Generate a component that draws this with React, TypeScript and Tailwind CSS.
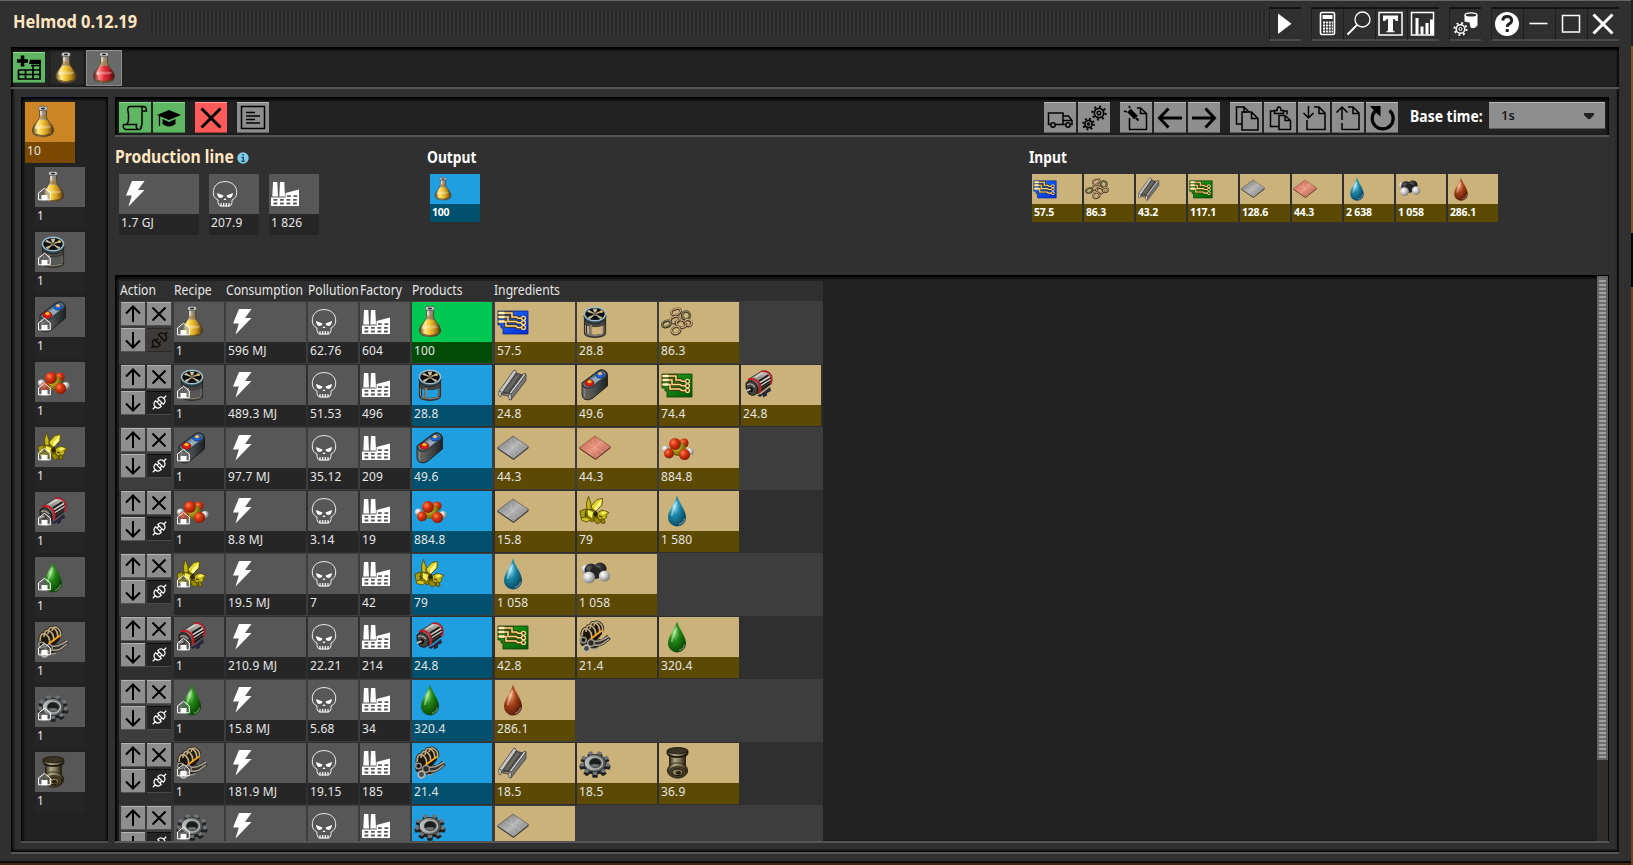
import React from "react";

const FONT = "font-['Noto_Sans','Open_Sans',sans-serif]";

function Defs() {
  const lin = (id: string, stops: string[], x2 = 1, y2 = 0) => (
    <linearGradient id={id} x1="0" y1="0" x2={x2} y2={y2}>
      {stops.map((c, i) => (
        <stop key={i} offset={i / (stops.length - 1)} stopColor={c} />
      ))}
    </linearGradient>
  );
  const rad = (id: string, a: string, b: string, c: string) => (
    <radialGradient id={id} cx="0.35" cy="0.35" r="0.75">
      <stop offset="0" stopColor={a} />
      <stop offset="0.4" stopColor={b} />
      <stop offset="1" stopColor={c} />
    </radialGradient>
  );
  return (
    <svg width="0" height="0" className="absolute">
      <defs>
        {lin("yellow", ["#7c5a1c", "#ffe98a", "#f0c030", "#c08c20", "#5c3e0c"])}
        {lin("red", ["#7a1a1a", "#ff8a8a", "#e03038", "#b81824", "#4a0a0e"])}
        {lin("glass", ["#3c3630", "#c8bca8", "#7c7262", "#3a342c"])}
        {lin("batt", ["#6e6c66", "#4a4c4c", "#1a2024"])}
        {lin("steel", ["#c8caca", "#7c807e", "#4c4e4e"])}
        {lin("plate", ["#6c6c6c", "#b4b4b4", "#747474"], 1, 1)}
        {lin("copper", ["#b8604c", "#e8937c", "#a8543e"], 1, 1)}
        {lin("blueb", ["#1c78ff", "#0628d0"], 1, 1)}
        {lin("greenb", ["#20a818", "#065806"], 1, 1)}
        {lin("pipeg", ["#2c2618", "#b0a888", "#7c7254", "#201a0e"])}
        {lin("motor", ["#c8c4bc", "#7c7874", "#2c2a2a"], 0, 1)}
        {rad("dblue", "#a8e4f4", "#1c88aa", "#083c54")}
        {rad("dgreen", "#98e880", "#208414", "#083a04")}
        {rad("dred", "#f4b080", "#a8441a", "#481404")}
        {rad("bred", "#ff8050", "#d83410", "#741804")}
        {rad("byel", "#e8e060", "#b0a01c", "#504604")}
        {rad("bwhite", "#ffffff", "#d0d0d0", "#6c6c6c")}
        {rad("bblack", "#606060", "#303030", "#101010")}
      </defs>
    </svg>
  );
}

function Flask({ c }: { c: string }) {
  return (
    <g>
      <path d="M12.500 3v8.500Q11 15 7 19.500q-4 7 2 10 7 2.500 14 0 6-3 2-10-4-4.500-5.500-8V3z" fill="url(#glass)" stroke="#4a3a18" strokeWidth=".7" />
      <path d="M11.600 14.500 7.500 20q-3.500 6 2 8.300 6.500 2.200 13 0 5.500-2.300 2-8.300l-4.100-5.500q-4.400-2-8.800 0z" fill={`url(#${c})`} />
      <ellipse cx="16" cy="21" rx="8" ry="1.600" fill="#fff" opacity=".3" />
      <path d="M10.500 17.500 8 22l2.500 2z" fill="#fff" opacity=".55" />
      <path d="M9 28q7 3 14 0" stroke="#5c3c0c" strokeWidth="1.200" fill="none" opacity=".7" />
      <rect x="13.200" y="5" width="1.800" height="7" fill="#fff" opacity=".55" />
      <path d="M12.800 9.500h6.400v3.500h-6.400z" fill="#a87c30" opacity=".6" />
      <ellipse cx="16" cy="2.400" rx="4.400" ry="2.200" fill="#dcdcdc" stroke="#555" strokeWidth=".8" />
      <ellipse cx="16" cy="2.500" rx="2.400" ry="1" fill="#2c2c2c" />
    </g>
  );
}

function Drop({ c }: { c: string }) {
  return (
    <g>
      <path d="M16 .5C14.500 7 7 15 7 22.500a9 9 0 0 0 18 0C25 15 17.500 7 16 .5z" fill={`url(#${c})`} />
      <path d="M15.500 6.500C14 13 11 16 10.800 21" stroke="#fff" strokeWidth="1.700" fill="none" opacity=".4" />
      <path d="M18 29.500q5-1.500 5.500-6" stroke="#fff" strokeWidth="1.400" fill="none" opacity=".35" />
    </g>
  );
}

const TRACES = "M1 7h14v4h4.500l1.500 1.300h4M1 11h10v4.500h8l1.500 1.200h4M1 15.500h8v4.500h10l1.500 1.500h4";

function Board({ c, edge }: { c: string; edge: string }) {
  return (
    <g>
      <path d="M1 5h30v23H6v-6H4v-3H1z" fill={`url(#${c})`} stroke={edge} strokeWidth=".8" />
      <path d={TRACES} stroke="#4a3004" strokeWidth="3.300" fill="none" />
      <path d={TRACES} stroke="#ffdc8c" strokeWidth="1.500" fill="none" />
      <path d="M2 7h5.500M2 11h5.500M2 15.500h5.500" stroke="#fff0c0" strokeWidth="2.700" />
      {[12.300, 16.700, 21.500].map((y) => (
        <circle key={y} cx="26.500" cy={y} r="1.900" fill="#2c2408" stroke="#ffdc8c" strokeWidth="1.300" />
      ))}
    </g>
  );
}

function Gear() {
  const a = [0, 40, 80, 120, 160, 200, 240, 280, 320];
  return (
    <g transform="translate(16 16) scale(1 .8)">
      <g transform="translate(0 3)" fill="#1e2020">
        {a.map((d) => (
          <rect key={d} x="-2.700" y="-15.500" width="5.400" height="7" rx="1" transform={`rotate(${d + 20})`} />
        ))}
        <circle r="11.500" />
      </g>
      <g fill="#70747a">
        {a.map((d) => (
          <rect key={d} x="-2.200" y="-15" width="4.400" height="6" rx="1" transform={`rotate(${d + 20})`} />
        ))}
      </g>
      <circle r="10.800" fill="url(#steel)" stroke="#2c2e2e" strokeWidth="1" />
      <circle r="7.600" fill="none" stroke="#b8bcbc" strokeWidth="1.300" />
      <circle r="5.800" fill="#1c1e1e" />
      <path d="M-5 2.500A5.800 5.800 0 0 0 5 2.500Q0 0-5 2.500z" fill="#6c706e" />
    </g>
  );
}

function Plate({ c, edge }: { c: string; edge: string }) {
  return (
    <g>
      <path d="M.5 15.500 16.500 26.500 31.500 14.500v1.800L16.500 28 .5 17z" fill={edge} />
      <path d="M.5 15.500 16 4l15.500 10.500-15 12z" fill={`url(#${c})`} stroke={edge} strokeWidth=".5" />
      <path d="M8 11 24 20M22 9 10 22M13 7l5 17" stroke="#fff" strokeWidth=".8" opacity=".25" />
      <path d="M2 16 16.500 26 30 15" stroke="#fff" strokeWidth=".6" opacity=".4" fill="none" />
    </g>
  );
}

function Engine() {
  return (
    <g>
      <path d="M6.500 13v14q0 3 9.500 3.500 9.500-.5 9.500-3.500V13" fill="none" stroke="#34302c" strokeWidth="3.200" />
      <path d="M6.500 14v13M25 14v13" fill="none" stroke="#8c8880" strokeWidth="1.100" />
      <path d="M6 14q10 6 20 0v4.500q-10 4.500-20 0z" fill="#4c4844" stroke="#24201e" strokeWidth=".6" />
      <path d="M11.500 18.500v10" stroke="#5c5854" strokeWidth="2.400" />
      <path d="M12 19v9" stroke="#b0aca4" strokeWidth=".9" />
      <path d="M7 28q9 3.500 18 0" stroke="#7c786e" strokeWidth="1.400" fill="none" />
      <ellipse cx="16" cy="10.500" rx="11" ry="7.500" fill="#34444c" stroke="#1c262c" />
      <ellipse cx="16" cy="8" rx="10.500" ry="6.800" fill="#0c0e10" stroke="#9cbecc" strokeWidth="1.400" />
      <path d="M15 7.500 8.500 5.500l1.500-1.300zM17 7.500l6-3 1 1.300zM15 9l-6 2.500 2 1.200zM17 9l6 2.500-1.500 1.300zM15.300 6l-1-3h3.500l-1 3z" fill="#c8bc98" stroke="#d8ccaa" strokeWidth=".7" />
      <circle cx="16" cy="8" r="2" fill="#7c7050" />
      <path d="M21 5l2.500 1.500" stroke="#e0b840" strokeWidth="1.500" />
    </g>
  );
}

function Battery() {
  return (
    <g>
      <path d="M3 14 19.500 1.500q3-1.500 6 0 3 1.500 3 4.500v11L14 29q-4 3-8 1.500Q3 29 3 25z" fill="url(#batt)" stroke="#141414" strokeWidth=".8" />
      <path d="M3.500 14 20 2q3-1.500 5.500 0 3 2.500 1 5.500L14 17.500q-3.500 2.500-7.500 1-3.500-1.500-3-4.500z" fill="#6c8698" stroke="#30383c" strokeWidth="1.500" />
      <path d="M12 11l6-4.500 4 3-6 4.500z" fill="#a4bccc" opacity=".7" />
      <path d="M5.500 20v8" stroke="#a8a49c" strokeWidth="1.200" opacity=".5" />
      <ellipse cx="10.300" cy="14" rx="4.300" ry="3.200" fill="#e01810" stroke="#7c0c08" strokeWidth=".8" />
      <ellipse cx="10.500" cy="12.600" rx="2.200" ry="1.700" fill="#ffc030" />
      <ellipse cx="21" cy="6" rx="4.200" ry="3" fill="#1c64d8" stroke="#0c347c" strokeWidth=".8" />
      <ellipse cx="21" cy="4.600" rx="2.100" ry="1.600" fill="#ffbc54" />
    </g>
  );
}

function Acid() {
  return (
    <g>
      <circle cx="23" cy="11" r="4.600" fill="url(#bred)" />
      <circle cx="4.500" cy="17" r="3.600" fill="url(#bwhite)" />
      <circle cx="17" cy="16.500" r="7.600" fill="url(#byel)" />
      <circle cx="8" cy="21.500" r="5" fill="url(#bred)" />
      <circle cx="29" cy="19.500" r="3.600" fill="url(#bwhite)" />
      <circle cx="23.500" cy="22.500" r="5.600" fill="url(#bred)" />
      <circle cx="14" cy="12" r="5.900" fill="url(#bred)" />
    </g>
  );
}

function Gas() {
  return (
    <g>
      <circle cx="7" cy="11" r="4.500" fill="url(#bwhite)" />
      <circle cx="12" cy="12" r="6.500" fill="url(#bblack)" />
      <circle cx="21" cy="11" r="6.500" fill="url(#bblack)" />
      <circle cx="16.500" cy="15" r="6" fill="#242424" />
      <circle cx="25.500" cy="18" r="5.600" fill="url(#bwhite)" />
      <circle cx="10" cy="19.500" r="6" fill="url(#bwhite)" />
    </g>
  );
}

function Sulfur() {
  return (
    <g stroke="#4c4402" strokeWidth=".8">
      <path d="M7.500 8 9.500 1.500 12 9v9l-4-1z" fill="#c8b814" />
      <path d="M12 11 18 4.500l5.500-1L23 10l-8 8z" fill="#e0d428" />
      <path d="M16 11.500 22.500 4.500l-1 5.500-5.500 7z" fill="#fffb90" stroke="none" />
      <path d="M1 16l5-2 4 4-4 6-4-1z" fill="#a89c10" />
      <path d="M7 14l8 1 4 7-6 5-7-5z" fill="#8c8006" />
      <path d="M9 15l5 2-1 6-4-3z" fill="#f4f060" stroke="none" />
      <path d="M18 18l5-3 7 2.500-3 3 1 1.500-4 4-5-2z" fill="#c0b010" />
      <path d="M21 18l4-2 3 1.500-4 2.500z" fill="#f4ec60" stroke="none" />
      <path d="M15 22l4 1 3 4-4 2-3-3zM22 24l3 0 1 4-3 .5z" fill="#988a06" />
      <path d="M2 23l5-1 5 2.500-4 2.500-5-1.500z" fill="#d0c41c" />
      <path d="M14 19l3-4 2 5-3 2z" fill="#2c2602" stroke="none" />
      <path d="M6 18l2 3M20 21l3 1" stroke="#3c3402" strokeWidth="1.300" />
    </g>
  );
}

function Motor() {
  return (
    <g>
      <path d="M14 26l4-1 9-7 1 4-4 2v2.500l-4 2V26l-3 2z" fill="#26263c" />
      <path d="M6 10 18 2.500q5-2 8.500 1Q31 8 27.500 15.500L16 24q-7 2-11-3-2-6 1-11z" fill="url(#motor)" stroke="#242222" strokeWidth=".8" />
      <path d="M16 12l9.500-6M17 15l11-6.500M18 18l10-6.500M18 21l9-6.500" stroke="#141214" strokeWidth="1.500" />
      <path d="M12 8.500l8-5M17 13.700l10-6M18 16.600l9.500-6" stroke="#e0dcd4" strokeWidth="1.100" />
      <path d="M5 10.500q7-2 11 4 3 5 0 9.500" fill="none" stroke="#c81c26" strokeWidth="1.900" />
      <path d="M18 2.500q7-1 9.500 4 2.500 5 0 9" fill="none" stroke="#c81c26" strokeWidth="1.500" />
      <path d="M3 14q4-4 8-1 5 4 3 11-3 4-8 1-4-5-3-11z" fill="#44423e" stroke="#141414" />
      <path d="M4 16q4-3 8 2" stroke="#a8a49c" strokeWidth="1.400" fill="none" />
      <circle cx="7.500" cy="20.500" r="2.600" fill="#141210" />
      <path d="M3 22l4.500-1.800" stroke="#d0ccc4" strokeWidth="1.800" />
    </g>
  );
}

function Block() {
  return (
    <g fill="none">
      <path d="M2 12 14 1l9 3v9L13 25l-9-3z" fill="#1c170e" />
      <path d="M3 15Q3 6 8.500 8q5 3 4 10M7 11Q7 3 12.500 5q5 3 4 10M11 8Q11 0 16.500 2q5 3 4 10M15 5Q16-1 20.500 2q4 3 3 8" stroke="#2c2414" strokeWidth="3.200" />
      <path d="M3 15Q3 6 8.500 8q5 3 4 10M7 11Q7 3 12.500 5q5 3 4 10M11 8Q11 0 16.500 2q5 3 4 10M15 5Q16-1 20.500 2q4 3 3 8" stroke="#c0ad84" strokeWidth="1.500" />
      <path d="M11.500 18 23 9.500" stroke="#ffa814" strokeWidth="1.700" />
      <path d="M1 17q-1 7 4 9l12 2 8-7-4-3-7 2z" fill="#26221a" />
      <path d="M15 22q6 2 10-2l5-4" stroke="#34302a" strokeWidth="5.500" />
      <path d="M14 20q7 1 11-2l5-3M15 24q7 1 11-3l4-3" stroke="#aca494" strokeWidth="1.500" />
      <circle cx="4.500" cy="19" r="2.800" stroke="#98948a" strokeWidth="1.500" fill="#1c1a18" />
      <circle cx="12" cy="22" r="3.400" stroke="#98948a" strokeWidth="1.500" fill="#2c2a26" />
      <circle cx="7.500" cy="27.500" r="3.300" stroke="#b8b4aa" strokeWidth="1.700" fill="#4c4a46" />
      <path d="M14 27.500q3 1 5-1" stroke="#98948a" strokeWidth="1.500" />
    </g>
  );
}

function Pipe() {
  return (
    <g stroke="#201a0e" strokeWidth=".8">
      <path d="M8.500 7h16v15h-16z" fill="url(#pipeg)" />
      <path d="M6 4q0-3 10.500-3.500Q27 1 27 4v3Q25 10.500 16.500 10.500 8 10.500 6 7z" fill="url(#pipeg)" />
      <ellipse cx="16.500" cy="3.800" rx="9.800" ry="3" fill="#3c3422" />
      <path d="M7 7.800q9 4 19 0" stroke="#141008" strokeWidth="1.300" fill="none" />
      <ellipse cx="16.500" cy="23.500" rx="10.200" ry="7.700" fill="url(#pipeg)" />
      <ellipse cx="16.500" cy="25" rx="8" ry="5.500" fill="#50462c" />
      <ellipse cx="16.500" cy="25.300" rx="5.500" ry="3.400" fill="#8c8058" stroke="#241e10" strokeWidth="1.200" />
      <ellipse cx="17.500" cy="25.800" rx="2.300" ry="1.500" fill="#2c2412" />
    </g>
  );
}

function Beam() {
  return (
    <g stroke="#343434" strokeWidth=".7">
      <path d="M2 22 17 1l2 1 1 4L6 26z" fill="#c4c4c4" />
      <path d="M5 24 19 4l7 2-13 19z" fill="#484844" />
      <path d="M7 22.500 20 5l3 1-12 17z" fill="#68685f" stroke="none" />
      <path d="M12 24.500 27 4.500l2 .5v6.500L14 31z" fill="#747474" />
      <path d="M12 24.500 27 4.500l2 .5-15 20z" fill="#e4e4e4" />
      <path d="M2 22l2 .6v2.200l8 2v-2l2 .8v5.500l-2-.8v-3l-8-2v2.500l-2-.8z" fill="#f0f0f0" />
    </g>
  );
}

function Wire() {
  const rings = [
    [15, 6, 4.800, 3],
    [25, 9.500, 3.900, 3.900],
    [14, 14, 4.600, 3],
    [27, 17, 3.600, 3],
    [5.500, 18, 4.300, 3],
    [20, 18, 5, 3.600],
    [15, 24.500, 4.300, 3.600],
  ];
  return (
    <g fill="none">
      {rings.map(([x, y, a, b], i) => (
        <g key={i} transform={`rotate(${i % 2 ? 20 : -20} ${x} ${y})`}>
          <ellipse cx={x} cy={y} rx={a} ry={b} stroke="#4a3822" strokeWidth="2.600" />
          <ellipse cx={x} cy={y - 0.500} rx={a} ry={b} stroke={i % 3 === 1 ? "#7c8464" : "#d8b48c"} strokeWidth="1.100" />
        </g>
      ))}
    </g>
  );
}

function House() {
  return (
    <g>
      <path d="M1.500 28.800V22L7.500 17.300 13.300 22v6.800z" fill="#777" fillOpacity=".45" stroke="#fff" strokeWidth="1" />
      <path d="M4.500 24h6v5.200h-6z" fill="#fff" />
    </g>
  );
}

function Bolt() {
  return <path d="M11 3h12.500L17 12h6.500L7.500 28.500l3.300-11H5z" fill="#fff" />;
}

function Skull() {
  return (
    <g>
      <path
        d="M7 24.500V22Q2.500 20 2.300 15C2 8 7 3.600 14 3.600S26 8 25.700 15q-.2 5-4.700 7v2.500q0 3-3 3.500h-8q-3-.5-3-3.500z"
        fill="none"
        stroke="#eee"
        strokeWidth="1"
      />
      <path d="M6 15l6.500 2.500q-.5 2.500-3.500 2.500-2.500-.5-3-5zM22 15l-6.500 2.500q.5 2.500 3.500 2.500 2.500-.5 3-5zM12.500 22l1.500-2 1.500 2z" fill="#fff" />
      <path d="M10 25v3.500M12.700 25v3.500M15.300 25v3.500M18 25v3.500" stroke="#fff" strokeWidth="1.200" />
    </g>
  );
}

function Factory() {
  return (
    <g fill="#fff">
      <path d="M2 4h4.300l.7 14.500H1.300zM9 4h4.300l.7 14.500H8.300z" />
      <path fillRule="evenodd" d="M0 19.500h14.500V15L28 11.500V28H0zM2.500 21v1.800h3.800V21zm6.500 0v1.800h3.800V21zm6.500 0v1.800h3.800V21zm6.500 0v1.800h3.800V21zM2.500 24.600v1.800h3.800v-1.800zm6.500 0v1.800h3.800v-1.800zm6.500 0v1.800h3.800v-1.800zm6.500 0v1.800h3.800v-1.800zM16 17.200V19h3.800v-1.800zm6.500 0V19h3.800v-1.800z" />
    </g>
  );
}

const SPRITES: Record<string, React.ReactNode> = {
  flask: <Flask c="yellow" />,
  redflask: <Flask c="red" />,
  engine: <Engine />,
  battery: <Battery />,
  acid: <Acid />,
  gas: <Gas />,
  sulfur: <Sulfur />,
  motor: <Motor />,
  block: <Block />,
  gear: <Gear />,
  pipe: <Pipe />,
  beam: <Beam />,
  wire: <Wire />,
  iron: <Plate c="plate" edge="#3c3c3c" />,
  copper: <Plate c="copper" edge="#703424" />,
  adv: <Board c="blueb" edge="#0a2a90" />,
  circuit: <Board c="greenb" edge="#0a3c06" />,
  water: <Drop c="dblue" />,
  lube: <Drop c="dgreen" />,
  heavy: <Drop c="dred" />,
  bolt: <Bolt />,
  skull: <Skull />,
  factory: <Factory />,
};

function Sprite({ name, size = 32, recipe = false }: { name: string; size?: number; recipe?: boolean }) {
  return (
    <svg width={size} height={size} viewBox="0 0 32 32" className="block shrink-0 overflow-visible">
      {SPRITES[name]}
      {recipe && <House />}
    </svg>
  );
}

const TONES = {
  gray: ["bg-[#575757]", "bg-[#262626]"],
  side: ["bg-[#575757]", "bg-[#262526]"],
  orange: ["bg-[#cc8524]", "bg-[#7b4800]"],
  green: ["bg-[#00c853]", "bg-[#034c08]"],
  blue: ["bg-[#209fe0]", "bg-[#00506e]"],
  tan: ["bg-[#cab27a]", "bg-[#5c4a04]"],
} as const;
type Tone = keyof typeof TONES;

function Cell({ icon, label, tone = "gray", wide = false, recipe = false }: { icon: string; label: string; tone?: Tone; wide?: boolean; recipe?: boolean }) {
  const [top, bottom] = TONES[tone];
  return (
    <div className={`flex shrink-0 flex-col ${wide ? "w-[80px]" : "w-[50px]"}`}>
      <div className={`h-[40px] pl-[2px] pt-[4px] ${top}`}>
        <Sprite name={icon} recipe={recipe} />
      </div>
      <div className={`h-[21px] whitespace-nowrap pl-[2px] text-[12px] leading-[18px] tracking-[0.15px] text-[#e6e6e6] ${bottom}`}>{label}</div>
    </div>
  );
}

function SmallCell({ icon, label, tone }: { icon: string; label: string; tone: Tone }) {
  const [top, bottom] = TONES[tone];
  return (
    <div className="flex w-[50px] shrink-0 flex-col">
      <div className={`h-[30px] pl-[1px] pt-[3px] ${top}`}>
        <Sprite name={icon} size={24} />
      </div>
      <div className={`h-[18px] whitespace-nowrap pl-[2px] text-[10.500px] font-bold leading-[17px] tracking-[-0.2px] text-white ${bottom}`}>{label}</div>
    </div>
  );
}

type Kind = "green" | "red" | "gray";
const KIND = {
  green: "bg-[#5fb663] border-t-[#8fd892] border-b-[#3a7a3c]",
  red: "bg-[#fe5a5a] border-t-[#ff9a9a] border-b-[#a83a3a]",
  gray: "bg-[#8e8e8e] border-t-[#b8b8b8] border-b-[#5c5c5c]",
};

function Tool({ kind = "gray", children }: { kind?: Kind; children: React.ReactNode }) {
  return (
    <div className={`h-[31px] w-[32px] shrink-0 border-b border-t ${KIND[kind]}`}>
      <svg width="32" height="29" viewBox="0 1 32 29" fill="none" stroke="#000" strokeWidth="1.500" className="block">
        {children}
      </svg>
    </div>
  );
}

function FrameButton({ children }: { children?: React.ReactNode }) {
  return (
    <div className="h-[34px] w-[32px] border-b-2 border-l border-t-2 border-b-[#4c4a48] border-l-[#241c1a] border-t-[#151212] bg-[#2f2f2f]">
      <svg width="31" height="30" viewBox="0.500 0.500 31 30" fill="none" stroke="#fff" className="block">
        {children}
      </svg>
    </div>
  );
}

function TitleBar() {
  return (
    <header className="flex h-[46px] pl-[13px] pt-[6px]">
      <div className="w-[138px] pt-[2px] text-[#ffe6c0]">
        <span className="block origin-left scale-x-[0.91] whitespace-nowrap text-[18px] font-bold leading-[24px]">Helmod 0.12.19</span>
      </div>
      <div className="mt-[3px] h-[24px] w-[1115px] bg-[repeating-linear-gradient(90deg,#272727_0px,#272727_2px,#363536_2px,#363536_4px)]" />
      <div className="ml-[3px] flex gap-[10px]">
        <div className="flex">
          <FrameButton>
            <path d="M8.500 5v20.500L22 15.200z" fill="#fff" stroke="none" />
          </FrameButton>
        </div>
        <div className="flex">
          <FrameButton>
            <rect x="9" y="4" width="14" height="22" rx="1.500" strokeWidth="1.600" />
            <rect x="11" y="6.500" width="10" height="4" fill="#fff" stroke="none" />
            <path d="M11.500 14h10M11.500 17h10M11.500 20h10M11.500 23h10" strokeWidth="2" strokeDasharray="2 .9" />
          </FrameButton>
          <FrameButton>
            <circle cx="19" cy="11" r="7.500" strokeWidth="1.300" />
            <path d="M13.500 16.500 4 26" strokeWidth="2" />
          </FrameButton>
          <FrameButton>
            <rect x="3.500" y="4" width="23" height="22.500" strokeWidth="1.500" />
            <path d="M7.500 7h15v5.500h-2.300q0-2-2.700-2v11q0 1.500 2 1.500v.7h-9v-.7q2 0 2-1.500v-11q-2.700 0-2.700 2H7.500z" fill="#fff" stroke="none" />
          </FrameButton>
          <FrameButton>
            <rect x="4" y="4" width="22" height="22.500" strokeWidth="1.500" />
            <path d="M9.500 26V9.500M14.500 26V18M19.500 26V14.500M24 26V11" strokeWidth="3" />
          </FrameButton>
        </div>
        <div className="flex">
          <FrameButton>
            <path d="M15 6.500q7-3 13 0V17q-3 4-7 2l-1-5-5-1z" fill="#fff" stroke="none" />
            <ellipse cx="21.500" cy="6.500" rx="6" ry="2.200" fill="#2f2f2f" strokeWidth="1.200" />
            <circle cx="11" cy="20.500" r="4.300" strokeWidth="1.500" fill="#2f2f2f" />
            <circle cx="11" cy="20.500" r="1.500" />
            <circle cx="11" cy="20.500" r="6" strokeWidth="2" strokeDasharray="1.900 2.810" />
          </FrameButton>
        </div>
        <div className="flex">
          <FrameButton>
            <circle cx="15.500" cy="15.500" r="12" fill="#fff" stroke="none" />
            <path d="M11.200 12q.5-4 4.500-4t4.500 3.500q0 2.500-2.500 3.800-2 1-2 3.200M15.700 20.500v3" stroke="#222" strokeWidth="3" />
          </FrameButton>
          <FrameButton>
            <path d="M6 15h18" strokeWidth="1.600" />
          </FrameButton>
          <FrameButton>
            <rect x="7" y="7" width="17" height="16.500" strokeWidth="1.500" />
          </FrameButton>
          <FrameButton>
            <path d="M6 6l19 19M25 6 6 25" strokeWidth="3" />
          </FrameButton>
        </div>
      </div>
    </header>
  );
}

function Toolbar() {
  return (
    <div className="flex h-[40px] border-b-2 border-b-[#565656] bg-[#222222] pl-[4px] pt-[5px] shadow-[inset_2px_3px_3px_#000,inset_-2px_0_2px_#0a0a0a]">
      <div className="flex w-[925px]">
        <div className="flex gap-[2px]">
          <Tool kind="green">
            <path d="M24.500 4.500H11Q8.500 4.500 8.800 8l.7 4v6.500L8 23M24.500 4.500q3 0 3 4.500h-4.500M24.500 4.500Q22.500 5 23 9v13.500l-1.500 3M4.500 22.500h13q-1 3 1.500 5 4 .5 3.500-4.500M4.500 22.500q-1 4.500 2.500 5h12" />
          </Tool>
          <Tool kind="green">
            <path d="M16 8 4 13l12 5 12-5z" fill="#000" stroke="none" />
            <path d="M9.500 17v5q6.500 5 13 0v-5L16 20z" fill="#000" stroke="none" />
            <path d="M6.500 14v10" strokeWidth="1.300" />
          </Tool>
        </div>
        <div className="ml-[10px]">
          <Tool kind="red">
            <path d="M6.500 6.500l19 19M25.500 6.500l-19 19" strokeWidth="3" />
          </Tool>
        </div>
        <div className="ml-[10px]">
          <Tool>
            <rect x="4.500" y="4.500" width="23" height="22" />
            <path d="M9 10.500h9M9 14h14M9 17.500h9M9 21h14" />
          </Tool>
        </div>
      </div>
      <div className="flex gap-[10px]">
        <div className="flex gap-[2px]">
          <Tool>
            <path d="M6.500 22.500H4.500V11H19v11.500h-8M19 14h5.500l3.500 4.500v4h-1.500M19 22.500h3M19 18.500h9" />
            <circle cx="9" cy="23" r="2.200" />
            <circle cx="24" cy="23" r="2.200" />
          </Tool>
          <Tool>
            <circle cx="21" cy="11" r="4.700" strokeWidth="1.700" />
            <circle cx="21" cy="11" r="6.600" strokeWidth="2" strokeDasharray="2 3.180" />
            <circle cx="21" cy="11" r="1.800" />
            <circle cx="10.500" cy="22" r="3.600" strokeWidth="1.700" />
            <circle cx="10.500" cy="22" r="5.400" strokeWidth="2" strokeDasharray="1.800 2.440" />
            <circle cx="10.500" cy="22" r="1" />
          </Tool>
        </div>
        <div className="flex gap-[2px]">
          <Tool>
            <path d="M9.500 16v11.500h17V11.500L20.500 6H17M20.500 6v5.500h6" />
            <path d="M9 8.500l7 7" strokeWidth="5" />
            <path d="M4 9l3 1M9 4l1 2" strokeWidth="1.700" />
            <path d="M16 16l2.500 2.500" strokeWidth="2" />
          </Tool>
          <Tool>
            <path d="M28 16H6M14.500 6.500 5.500 16l9 9.500" strokeWidth="3" />
          </Tool>
          <Tool>
            <path d="M4 16h22M17.500 6.500l9 9.500-9 9.500" strokeWidth="3" />
          </Tool>
        </div>
        <div className="flex gap-[2px]">
          <Tool>
            <path d="M12 22H6.500V5H14l5 5M14 5v5h3" />
            <path d="M12 10h9.500l6.500 6.500V28H12zM21.500 10v6.500H28" />
          </Tool>
          <Tool>
            <path d="M14.500 24.500H6.500V9H11M19 9h4v3.500M10.500 11.500h9V8.500h-2.500q0-3.500-2-3.500t-2 3.500h-2.500z" />
            <path d="M15 13.500h6l5.500 5V27.500H15zM21 13.500v5h5.500" />
          </Tool>
          <Tool>
            <path d="M16 5h5l6 6v16.500H9V18M21 5v6.500h6M10.500 4v12M5.500 11l5 5 5-5" />
          </Tool>
          <Tool>
            <path d="M16 5h5l6 6v16.500H10V21M21 5v6.500h6M10 18V5M4.500 10.500 10 5l5.500 5.500" />
          </Tool>
          <Tool>
            <path d="M23.500 8.500a10.500 10.500 0 1 1-14 .3" strokeWidth="3.200" />
            <path d="M4 4h10.500v10.500L11 11.500 7.500 8z" fill="#000" stroke="none" />
          </Tool>
        </div>
      </div>
      <div className="ml-[12px] w-[79px] pt-[3px] text-white">
        <span className="block origin-left scale-x-[0.9] whitespace-nowrap text-[15.500px] font-bold leading-[23px]">Base time:</span>
      </div>
      <div className="flex h-[27px] w-[116px] items-center justify-between border-b border-t border-b-[#5c5c5c] border-t-[#b8b8b8] bg-[#8e8e8e] pl-[12px] pr-[11px] text-[13px] font-semibold text-[#1c1c1c]">
        <span>1s</span>
        <svg width="10" height="7" viewBox="0 0 10 7" className="mt-[2px]">
          <path d="M0 0h10v2L6 6H4L0 2z" fill="#222" />
        </svg>
      </div>
    </div>
  );
}

const INPUTS = [
  ["adv", "57.5"],
  ["wire", "86.3"],
  ["beam", "43.2"],
  ["circuit", "117.1"],
  ["iron", "128.6"],
  ["copper", "44.3"],
  ["water", "2 638"],
  ["gas", "1 058"],
  ["heavy", "286.1"],
];

function Summary() {
  return (
    <section className="flex h-[138px] pt-[8px]">
      <div className="w-[312px]">
        <div className="flex h-[29px] text-[#ffe6c0]">
          <div className="w-[122px]">
            <span className="block origin-left scale-x-[0.87] whitespace-nowrap text-[18px] font-bold leading-[22px]">Production line</span>
          </div>
          <svg width="12" height="12" viewBox="0 0 12 12" className="mt-[7px]">
            <circle cx="6" cy="6" r="5.700" fill="#7fcdee" />
            <path d="M6 2v1.800M4.500 5.500H6.300V9M4.300 9.300h3.600" stroke="#26505e" strokeWidth="1.500" fill="none" />
          </svg>
        </div>
        <div className="flex gap-[10px] pl-[4px]">
          <Cell icon="bolt" label="1.7 GJ" wide />
          <Cell icon="skull" label="207.9" />
          <Cell icon="factory" label="1 826" />
        </div>
      </div>
      <div className="w-[602px] text-white">
        <div className="h-[29px]">
          <span className="block origin-left scale-x-[0.86] text-[16px] font-bold leading-[24px]">Output</span>
        </div>
        <div className="pl-[3px]">
          <SmallCell icon="flask" label="100" tone="blue" />
        </div>
      </div>
      <div className="text-white">
        <div className="h-[29px]">
          <span className="block origin-left scale-x-[0.86] text-[16px] font-bold leading-[24px]">Input</span>
        </div>
        <div className="flex gap-[2px] pl-[3px]">
          {INPUTS.map(([i, l]) => (
            <SmallCell key={i} icon={i} label={l} tone="tan" />
          ))}
        </div>
      </div>
    </section>
  );
}

type Row = { item: string; count: string; power: string; pollution: string; factory: string; out: string; ins: [string, string][] };
const ROWS: Row[] = [
  { item: "flask", count: "1", power: "596 MJ", pollution: "62.76", factory: "604", out: "100", ins: [["adv", "57.5"], ["engine", "28.8"], ["wire", "86.3"]] },
  { item: "engine", count: "1", power: "489.3 MJ", pollution: "51.53", factory: "496", out: "28.8", ins: [["beam", "24.8"], ["battery", "49.6"], ["circuit", "74.4"], ["motor", "24.8"]] },
  { item: "battery", count: "1", power: "97.7 MJ", pollution: "35.12", factory: "209", out: "49.6", ins: [["iron", "44.3"], ["copper", "44.3"], ["acid", "884.8"]] },
  { item: "acid", count: "1", power: "8.8 MJ", pollution: "3.14", factory: "19", out: "884.8", ins: [["iron", "15.8"], ["sulfur", "79"], ["water", "1 580"]] },
  { item: "sulfur", count: "1", power: "19.5 MJ", pollution: "7", factory: "42", out: "79", ins: [["water", "1 058"], ["gas", "1 058"]] },
  { item: "motor", count: "1", power: "210.9 MJ", pollution: "22.21", factory: "214", out: "24.8", ins: [["circuit", "42.8"], ["block", "21.4"], ["lube", "320.4"]] },
  { item: "lube", count: "1", power: "15.8 MJ", pollution: "5.68", factory: "34", out: "320.4", ins: [["heavy", "286.1"]] },
  { item: "block", count: "1", power: "181.9 MJ", pollution: "19.15", factory: "185", out: "21.4", ins: [["beam", "18.5"], ["gear", "18.5"], ["pipe", "36.9"]] },
  { item: "gear", count: "", power: "", pollution: "", factory: "", out: "", ins: [["iron", ""]] },
];

function Mini({ tone, children }: { tone: "up" | "off" | "on"; children: React.ReactNode }) {
  const cls =
    tone === "up"
      ? "bg-[#8e8e8e] border-t-[#b4b4b4] border-b-[#555555]"
      : tone === "off"
        ? "bg-[#3d3a39] border-t-[#2c2a29] border-b-[#2a2726]"
        : "bg-[#242424] border-t-[#0c0c0c] border-b-[#4a4a4a]";
  return (
    <div className={`h-[24px] w-[24px] border-b border-t ${cls}`}>
      <svg width="24" height="22" viewBox="0 1 24 22" fill="none" stroke="#000" strokeWidth="2" className="block">
        {children}
      </svg>
    </div>
  );
}

function Actions({ linked }: { linked: boolean }) {
  return (
    <div className="grid h-[50px] w-[53px] shrink-0 grid-cols-[24px_24px] content-start gap-[2px]">
      <Mini tone="up">
        <path d="M12 20V5M5 11.500 12 4.500l7 7" />
      </Mini>
      <Mini tone="up">
        <path d="M5.500 5.500l13 13M18.500 5.500l-13 13" />
      </Mini>
      <Mini tone="up">
        <path d="M12 4v15M5 12.500l7 7 7-7" />
      </Mini>
      {linked ? (
        <Mini tone="on">
          <g stroke="#fff" strokeWidth="1.200" transform="rotate(-45 12.500 11.500)">
            <path d="M3 11.500h3.500M18.500 11.500h3.500M11 7v9M14 7v9M11 7.500q-4.500 0-4.500 4t4.500 4M14 7.500q4.500 0 4.500 4t-4.500 4M11 9.500h3M11 13.500h3" />
          </g>
        </Mini>
      ) : (
        <Mini tone="off">
          <g stroke="#0c0a0a" strokeWidth="1.300" transform="rotate(-45 12.500 12)">
            <path d="M1 12h3M9.500 7.500v9M9.500 8Q4 8 4 12t5.500 4M9.500 10h3M9.500 14h3M15.500 7.500v9q5 0 5-4.500t-5-4.500zM20.500 12h3" />
          </g>
        </Mini>
      )}
    </div>
  );
}

function Head({ w, children }: { w: string; children: string }) {
  return (
    <div className={`shrink-0 ${w}`}>
      <span className="block origin-left scale-x-[0.9] whitespace-nowrap">{children}</span>
    </div>
  );
}

function Table() {
  return (
    <div className="h-[560px] w-[704px] overflow-hidden">
      <div className="flex h-[20px] bg-[#2f2f2f] pl-[1px] text-[13.500px] leading-[19px] text-[#e6e6e6]">
        <Head w="w-[54px]">Action</Head>
        <Head w="w-[52px]">Recipe</Head>
        <Head w="w-[82px]">Consumption</Head>
        <Head w="w-[52px]">Pollution</Head>
        <Head w="w-[52px]">Factory</Head>
        <Head w="w-[82px]">Products</Head>
        <Head w="w-[80px]">Ingredients</Head>
      </div>
      {ROWS.map((r, i) => (
        <div key={r.item} className={`flex h-[63px] gap-[2px] pl-[2px] pt-px ${i % 2 ? "bg-[#2f2f2f]" : "bg-[#3d3d3d]"}`}>
          <div className="-mr-[2px] flex">
            <Actions linked={i > 0} />
          </div>
          <Cell icon={r.item} label={r.count} recipe />
          <Cell icon="bolt" label={r.power} wide />
          <Cell icon="skull" label={r.pollution} />
          <Cell icon="factory" label={r.factory} />
          <Cell icon={r.item} label={r.out} tone={i ? "blue" : "green"} wide />
          <div className="ml-px flex gap-[2px]">
            {r.ins.map(([n, l]) => (
              <Cell key={n} icon={n} label={l} tone="tan" wide />
            ))}
          </div>
        </div>
      ))}
    </div>
  );
}

const SIDE = ["flask", "engine", "battery", "acid", "sulfur", "motor", "lube", "block", "gear", "pipe"];

export default function App() {
  return (
    <div className={`flex h-[865px] w-[1633px] overflow-hidden bg-[#3e2812] ${FONT}`}>
      <Defs />
      <div className="flex h-[863px] w-[1631px] shrink-0 flex-col border-b-2 border-t border-b-[#0c0a0a] border-t-[#666666] bg-[#313031]">
        <TitleBar />
        <main className="ml-[11px] flex h-[807px] w-[1608px] shrink-0 flex-col border-b-2 border-b-[#565656] shadow-[inset_2px_2px_3px_#000,inset_-2px_-2px_2px_#0a0a0a]">
          <div className="flex h-[42px] shrink-0 border-b-2 border-b-[#565656] bg-[#222222] pl-[2px] pt-[3px] shadow-[inset_2px_3px_3px_#000,inset_-2px_0_2px_#0a0a0a]">
            <div className="pt-[2px]">
              <Tool kind="green">
                <path d="M4 9h11M9.500 3.500v11" strokeWidth="3.600" />
                <path d="M5.500 17.500V27h21.500V8.500H17M5.500 18H27M5.500 22.500H27M18 13.500H27M12.500 17.500v9.500M20 12.500V27" strokeWidth="1.700" />
                <path d="M17 8h10.800v4H16z" fill="#000" stroke="none" />
              </Tool>
            </div>
            <div className="ml-[4px] h-[36px] w-[36px] bg-[#2a2a2a] pl-[1px] pt-[2px] shadow-[inset_0_0_3px_#000]">
              <Sprite name="flask" />
            </div>
            <div className="ml-[1px] h-[36px] w-[36px] border border-[#8c8c8c] bg-[#6a6a6a] pl-[1px] pt-[1px]">
              <Sprite name="redflask" />
            </div>
          </div>
          <div className="flex h-[763px] pl-[10px] pt-[8px]">
            <aside className="h-[746px] w-[87px] border-b-2 border-b-[#4c4c4c] bg-[#222222] pl-[4px] pt-[5px] shadow-[inset_2px_2px_3px_#000,inset_-2px_0_2px_#0a0a0a]">
              <Cell icon="flask" label="10" tone="orange" />
              <div className="mt-[4px] flex flex-col gap-[4px] pl-[10px]">
                {SIDE.map((s) => (
                  <Cell key={s} icon={s} label="1" tone="side" recipe />
                ))}
              </div>
            </aside>
            <div className="ml-[7px] flex w-[1494px] flex-col">
              <Toolbar />
              <Summary />
              <div className="flex h-[568px] justify-between border-b-2 border-b-[#565656] bg-[#222222] pl-[4px] pt-[6px] shadow-[inset_2px_3px_3px_#000,inset_-2px_0_2px_#0a0a0a]">
                <Table />
                <div className="-mt-[5px] mr-px h-[565px] w-[11px] bg-[#2e2d2c]">
                  <div className="h-[484px] w-[11px] border-2 border-[#666666] bg-[repeating-linear-gradient(180deg,#6e6e6e_0px,#6e6e6e_2px,#a0a0a0_2px,#a0a0a0_4px)]" />
                </div>
              </div>
            </div>
          </div>
        </main>
      </div>
      <div className="flex w-[2px] flex-col">
        <div className="h-[46px] bg-[#222222]" />
        <div className="h-[187px] bg-[#7a5527]" />
        <div className="h-[54px] bg-[#000000]" />
        <div className="flex-1 bg-[#6b4318]" />
      </div>
    </div>
  );
}
